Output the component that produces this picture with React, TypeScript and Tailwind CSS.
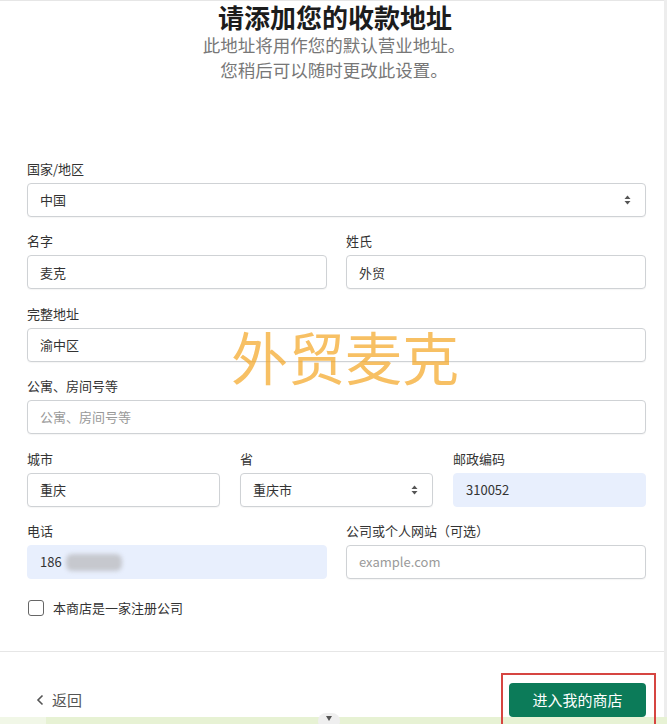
import React from "react";

function SelectArrows() {
  return (
    <svg width="7" height="10" viewBox="0 0 7 10" className="shrink-0">
      <path d="M3.5 0.5 L6.5 4 L0.5 4 Z" fill="#555" />
      <path d="M3.5 9.5 L6.5 6 L0.5 6 Z" fill="#555" />
    </svg>
  );
}

function Label({ children }: { children: React.ReactNode }) {
  return <div className="text-[13px] leading-[18px] text-[#333] mb-[5px] whitespace-nowrap">{children}</div>;
}

function Field({
  label,
  value,
  placeholder,
  select,
  filled,
  children,
}: {
  label: string;
  value?: string;
  placeholder?: string;
  select?: boolean;
  filled?: boolean;
  children?: React.ReactNode;
}) {
  return (
    <div className="flex flex-col min-w-0">
      <Label>{label}</Label>
      <div
        className={
          "relative h-[34px] rounded-[4px] flex items-center pl-[12px] pr-[14px] text-[13px] " +
          (filled
            ? "bg-[#e8effd] border border-[#e8effd]"
            : "bg-white border border-[#cfd2d5] shadow-[0_1px_1px_rgba(0,0,0,0.04)]")
        }
      >
        <span className={"flex-1 truncate " + (value ? "text-[#333]" : "text-[#9a9a9a]")}>
          {value || placeholder}
        </span>
        {select && <SelectArrows />}
        {children}
      </div>
    </div>
  );
}

export default function App() {
  return (
    <div className="relative w-[667px] h-[724px] overflow-hidden bg-white font-['Noto_Sans_CJK_SC','Noto_Sans',sans-serif]">
      <div className="flex h-full">
        <div className="w-[664px] h-full border-t border-[#e6e6e6] flex flex-col">
          <div className="text-center text-[26px] leading-[32px] font-bold text-[#1c1c1c] pl-[6px]">
            请添加您的收款地址
          </div>
          <div className="text-center text-[17.5px] leading-[24.5px] text-[#777] pl-[4px]">
            <div>此地址将用作您的默认营业地址。</div>
            <div>您稍后可以随时更改此设置。</div>
          </div>

          <div className="pl-[27px] pr-[18px] mt-[78px] flex flex-col gap-[15.4px]">
            <Field label="国家/地区" value="中国" select />
            <div className="grid grid-cols-2 gap-[19px]">
              <Field label="名字" value="麦克" />
              <Field label="姓氏" value="外贸" />
            </div>
            <Field label="完整地址" value="渝中区" />
            <Field label="公寓、房间号等" placeholder="公寓、房间号等" />
            <div className="grid grid-cols-3 gap-[20px]">
              <Field label="城市" value="重庆" />
              <Field label="省" value="重庆市" select />
              <Field label="邮政编码" value="310052" filled />
            </div>
            <div className="grid grid-cols-2 gap-[19px]">
              <Field label="电话" value="186" filled>
                <div className="absolute left-[38px] top-[8px] w-[56px] h-[17px] rounded-[6px] bg-[#c6c8ce] blur-[2px]" />
              </Field>
              <Field label="公司或个人网站（可选）" placeholder="example.com" />
            </div>
          </div>

          <div className="pl-[28px] mt-[19px] flex items-center gap-[9px] h-[20px]">
            <div className="w-[16px] h-[16px] rounded-[3px] border-[1.5px] border-[#666] bg-white" />
            <span className="text-[13px] text-[#333]">本商店是一家注册公司</span>
          </div>

          <div className="mt-[33px] border-t border-[#e6e6e6]" />

          <div className="flex items-center justify-between pl-[36px] pr-[18px] mt-[31px]">
            <div className="flex items-center gap-[8px] text-[15px] text-[#555]">
              <svg width="8" height="12" viewBox="0 0 8 12">
                <path d="M6.5 1.5 L2 6 L6.5 10.5" fill="none" stroke="#555" strokeWidth="1.6" />
              </svg>
              <span>返回</span>
            </div>
            <div className="w-[137px] h-[34px] rounded-[4px] bg-[#0c7b59] text-white text-[15px] flex items-center justify-center">
              进入我的商店
            </div>
          </div>
        </div>
        <div className="w-[3px] h-full bg-[#ededed]" />
      </div>

      {/* watermark */}
      <div className="absolute left-[231px] top-[323px] text-[57px] leading-[64px] text-[#f5a623] opacity-70 whitespace-nowrap pointer-events-none">
        外贸麦克
      </div>

      {/* bottom strip */}
      <div className="absolute left-0 right-0 bottom-0 h-[7px] bg-[#e7f2d4] flex">
        <div className="w-[46px] h-full bg-[#f1f7e7]" />
      </div>
      <div className="absolute left-[318px] top-[713px] w-[22px] h-[16px] rounded-full bg-[#efefef] flex items-start justify-center pt-[3px]">
        <svg width="6" height="5" viewBox="0 0 6 5">
          <path d="M0 0 L6 0 L3 5 Z" fill="#555" />
        </svg>
      </div>

      {/* red annotation box */}
      <div className="absolute left-[501px] top-[673px] w-[155px] h-[54px] border-2 border-[#d64541]" />
    </div>
  );
}
